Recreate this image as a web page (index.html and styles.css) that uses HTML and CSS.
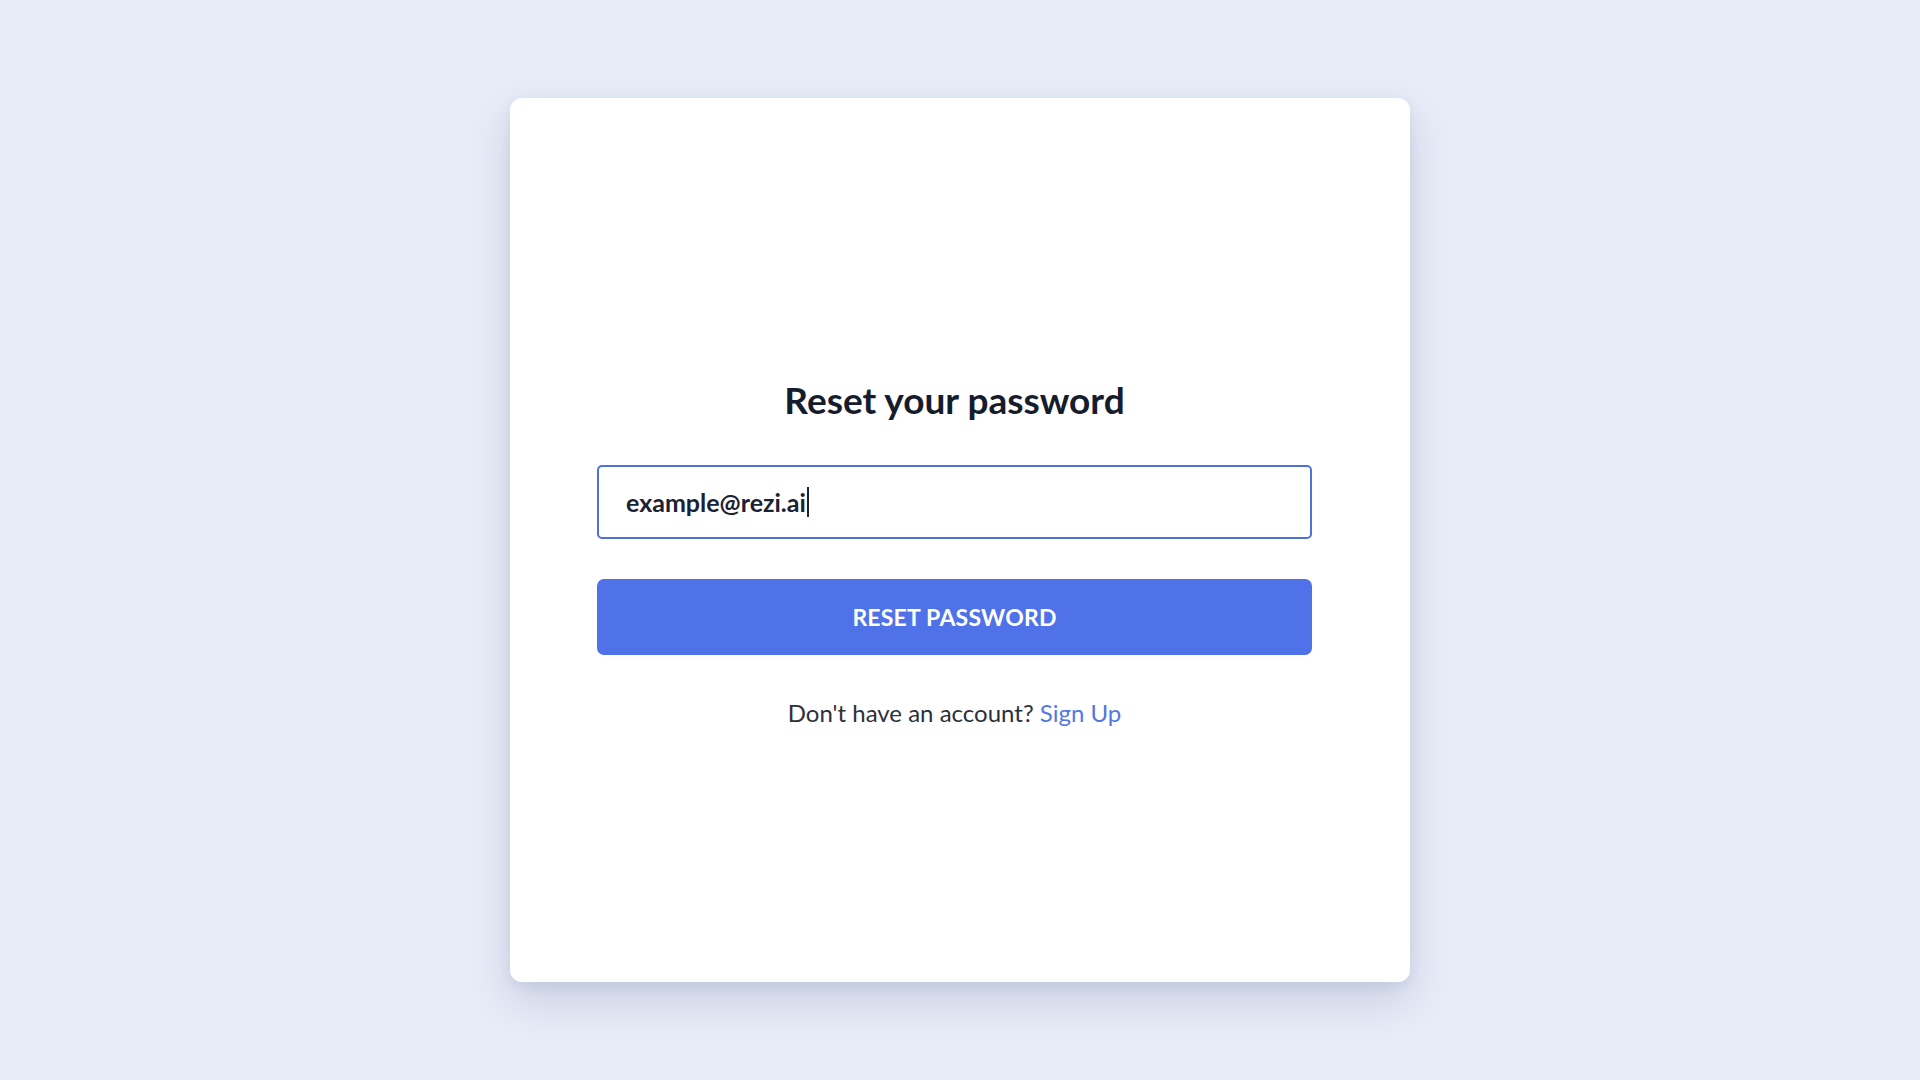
FILE: index.html
```html
<!DOCTYPE html>
<html lang="en">
<head>
<meta charset="utf-8">
<title>Reset your password</title>
<link rel="stylesheet" href="styles.css">
</head>
<body>
<main class="page">
  <section class="card">
    <h1 class="title">Reset your password</h1>
    <div class="field"><span class="value">example@rezi.ai</span><span class="caret"></span></div>
    <button class="btn" type="button">RESET PASSWORD</button>
    <p class="footer">Don't have an account? <a class="link" href="#">Sign Up</a></p>
  </section>
</main>
</body>
</html>
```
FILE: styles.css
```css
html, body {
  margin: 0;
  padding: 0;
  height: 100%;
}
body {
  background: #e8ecf8;
  font-family: Lato, "Open Sans", sans-serif;
}
.page {
  height: 100vh;
  display: flex;
  align-items: center;
  justify-content: center;
}
.card {
  box-sizing: border-box;
  width: 900px;
  height: 884px;
  background: #ffffff;
  border-radius: 12px;
  box-shadow: 0 18px 40px rgba(70, 85, 130, 0.20), 0 4px 12px rgba(70, 85, 130, 0.08);
  padding: 280px 98px 0 87px;
  display: flex;
  flex-direction: column;
  align-items: stretch;
}
.title {
  margin: 0;
  text-align: center;
  font-size: 37px;
  line-height: 44px;
  font-weight: 700;
  color: #151c2c;
}
.field {
  box-sizing: border-box;
  margin-top: 43px;
  height: 74px;
  border: 2px solid #5070da;
  border-radius: 5px;
  display: flex;
  align-items: center;
  padding-left: 27px;
  font-size: 25px;
  font-weight: 700;
  color: #1b2233;
}
.caret {
  display: inline-block;
  width: 2px;
  height: 30px;
  background: #1b2233;
  margin-left: 1px;
}
.btn {
  margin-top: 40px;
  height: 76px;
  border: none;
  border-radius: 7px;
  background: #4f72e9;
  color: #ffffff;
  font-family: Lato, "Open Sans", sans-serif;
  font-size: 23px;
  font-weight: 700;
  letter-spacing: 0.2px;
  cursor: pointer;
}
.footer {
  margin: 43px 0 0;
  text-align: center;
  font-size: 24px;
  line-height: 30px;
  color: #2b303b;
}
.link {
  color: #5577e2;
  text-decoration: none;
}
```
